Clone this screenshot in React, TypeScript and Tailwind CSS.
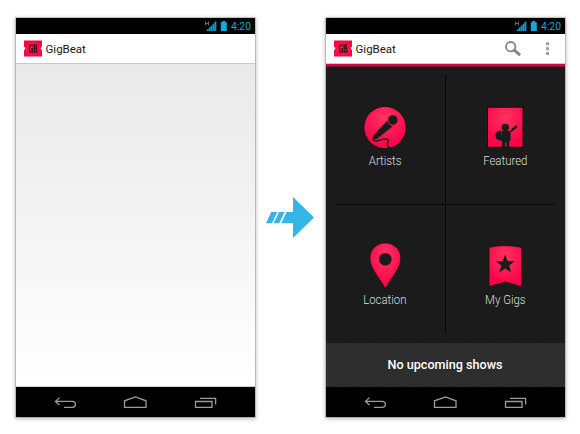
import type { ReactNode } from "react";

const BLACK = "#1b1b1b";

function StatusBar() {
  return (
    <div className="flex h-4 shrink-0 items-center justify-end bg-black pr-[2.500px]">
      <svg width="28" height="16" viewBox="0 0 28 16">
        <path d="M3.500 3.500v4M6.500 3.500v4M3.500 5.500h3" stroke="#777" strokeWidth="0.9" fill="none" />
        <path d="M4 13 14.300 3v10z" fill="#075f7e" />
        <path d="M5.500 13v-1.600M7.500 13V9.600M9.500 13V7.700M11.500 13V5.700M13.500 13V3.500" stroke="#0a9fd0" strokeWidth="1.300" />
        <path d="M18.800 4.300h1.600V3h2.800v1.300h1.600v8.800h-6z" fill="#14a9dc" />
      </svg>
      <span className="ml-[1px] w-[21px] whitespace-nowrap text-[11.500px] leading-4 text-[#1ba6d8]">
        <span className="inline-block origin-left scale-x-[0.9]">4:20</span>
      </span>
    </div>
  );
}

function Logo() {
  return (
    <svg width="18" height="17" viewBox="0 0 18 17">
      <defs>
        <radialGradient id="logo">
          <stop offset="0" stopColor="#ff2b58" />
          <stop offset="1" stopColor="#f90546" />
        </radialGradient>
      </defs>
      <path d="M0 .5h18v6.300q-1.300.3-1.300 1.600t1.300 1.600v6.500H0V10q1.300-.3 1.300-1.600T0 6.800z" fill="url(#logo)" />
      <g fill="none" stroke="#4a101c" strokeWidth="1.500">
        <path d="M8.200 6.400V5.200H5.600v6.700h2.700V8.700H7.200" />
        <path d="M10.200 4.900h2.100v3.300h-2.100h2.400v3.700h-2.400z" />
      </g>
    </svg>
  );
}

function ActionBar({ children }: { children?: ReactNode }) {
  return (
    <div className="flex h-[30px] shrink-0 items-center border-b border-[#c9c9c9] bg-white pl-2">
      <Logo />
      <span className="ml-1 text-[11.500px] leading-4 text-[#171717]">GigBeat</span>
      {children}
    </div>
  );
}

function NavBar() {
  return (
    <div className="h-[30px] shrink-0 bg-black">
      <svg width="239" height="30" viewBox="0 0 239 30" fill="none" stroke="#9d9d98" strokeWidth="1.300">
        <path d="M43.500 10.600 39.500 14.400l4 3.700M40 14.400h16.500a2.900 2.900 0 0 1 0 5.900H48" />
        <path d="M108.500 20.300v-6.500l11-3.800 10.500 3.800v6.500z" />
        <path d="M179.500 14.500h16.500v5.800h-16.500zM184 11.300h15.600v6.200" />
      </svg>
    </div>
  );
}

function Phone({ children }: { children: ReactNode }) {
  return (
    <div className="flex h-[399px] w-[239px] shrink-0 flex-col bg-white shadow-[0_0_0_1px_rgba(0,0,0,0.14),0_1px_4px_1px_rgba(0,0,0,0.26)]">
      <StatusBar />
      {children}
      <NavBar />
    </div>
  );
}

function Arrow() {
  return (
    <svg className="mt-[178px] shrink-0" width="71" height="43" viewBox="255 196 71 43" fill="#33b5e5">
      <path d="M293 197 314 217.400 293 238V223.200H281.200L286.600 212h6.400z" />
      <path d="M271.200 212h6.100L272 223.200h-6zM279 212h5.600l-5.400 11.200h-5.600z" />
    </svg>
  );
}

function Gradient({ id }: { id: string }) {
  return (
    <defs>
      <radialGradient id={id} cx="50%" cy="28%" r="65%">
        <stop offset="0" stopColor="#ff3460" />
        <stop offset="1" stopColor="#fb0448" />
      </radialGradient>
    </defs>
  );
}

function ArtistsIcon() {
  return (
    <svg width="50" height="50" viewBox="0 0 50 50">
      <Gradient id="artists" />
      <circle cx="25" cy="25.500" r="21.500" fill="#0f0f0f" />
      <circle cx="25" cy="25.500" r="20.700" fill="url(#artists)" />
      <circle cx="32.800" cy="18" r="4.800" fill={BLACK} />
      <path d="m27 18.800 5.200 6L17 36.800q-2.700.8-3.500-.2t.4-3.500z" fill={BLACK} />
      <path d="M27.800 17.300q.5 5.500 6.500 6.900" fill="none" stroke="#e51547" strokeWidth=".9" />
      <path d="M14 35c-2 2.500-.5 4.500 3.500 3.700 4-.8 8-3.200 10.500-.8 2 2-2.500 3.600-.3 5.600.7.7 1.600 1.200 1.300 2.800" fill="none" stroke={BLACK} strokeWidth="1.500" />
    </svg>
  );
}

function FeaturedIcon() {
  return (
    <svg width="50" height="50" viewBox="0 0 50 50">
      <Gradient id="featured" />
      <path d="M7 4.700h36.500v41H7z" fill="#0f0f0f" />
      <path d="M8 5.700h34.500v39H8z" fill="url(#featured)" />
      <circle cx="25.300" cy="25.500" r="3.800" fill={BLACK} />
      <path d="M21.700 29h7.500q1.300.8 1.300 3v6.700h-1.300v6.500h-2.800v-4.600h-1.300v4.600H22V39h-1.200z" fill={BLACK} />
      <path d="M21 28.500c-4 0-6 2.700-5.600 5.500.2 2.700 2 4.600 6.100 4.200z" fill={BLACK} />
      <path d="m30 30 6.500-5.200" stroke={BLACK} strokeWidth="1.700" />
      <path d="m32 27.800 5-4" stroke={BLACK} strokeWidth="2.200" />
    </svg>
  );
}

function LocationIcon() {
  return (
    <svg width="50" height="50" viewBox="0 0 50 50">
      <Gradient id="location" />
      <path
        d="M25.300 4C16.800 4 10 10.600 10 19c0 10 8.500 18.500 15.300 30.500C32 37.500 40.700 29 40.700 19 40.700 10.600 33.800 4 25.300 4z"
        fill="url(#location)" stroke="#101010" strokeWidth=".6"
      />
      <circle cx="25.300" cy="20.300" r="6.300" fill={BLACK} />
    </svg>
  );
}

function GigsIcon() {
  return (
    <svg width="50" height="50" viewBox="0 0 50 50">
      <Gradient id="gigs" />
      <path d="M9 8.200q16-3.200 32.500 0v39.300l-16.400-4.600L9 47.500z" fill="url(#gigs)" stroke="#101010" strokeWidth=".8" />
      <path
        d="m25.200 15.200 2.400 6.900 7.200.1-5.700 4.400 2.100 6.900-6-4-6 4 2.100-6.900-5.700-4.400 7.200-.1z"
        fill={BLACK}
      />
    </svg>
  );
}

function Tile({ label, icon, className }: { label: string; icon: ReactNode; className: string }) {
  return (
    <div className={`flex flex-col items-center ${className}`}>
      {icon}
      <span className="scale-x-[0.95] text-[12px] font-light leading-4 text-[#dedede]">{label}</span>
    </div>
  );
}

export default function App() {
  return (
    <div className="flex h-[434px] w-[580px] items-start overflow-hidden bg-white pl-[15.500px] pt-[18px] font-[Roboto,sans-serif]">
      <Phone>
        <ActionBar />
        <div className="flex-1 border-b border-[#cfcfcf] bg-linear-to-b from-[#e9e9e9] to-white" />
      </Phone>
      <Arrow />
      <Phone>
        <ActionBar>
          <svg className="ml-auto" width="61" height="29" viewBox="0 0 61 29">
            <circle cx="6.700" cy="12.700" r="4.700" fill="none" stroke="#858585" strokeWidth="1.800" />
            <path d="m10.200 16.200 5 4.200" stroke="#858585" strokeWidth="2.900" strokeLinecap="round" />
            <path d="M42 8.300h3v3h-3zM42 13.200h3v3h-3zM42 18.100h3v3h-3z" fill="#a0a0a0" />
          </svg>
        </ActionBar>
        <div className="h-[3px] shrink-0 border-b border-[#80112e] bg-[#d20940]" />
        <div className="flex flex-1 flex-col items-center bg-[#1b1b1b] pt-[8px]">
          <div className="grid h-[259px] w-[220px] grid-cols-2 grid-rows-[130px_129px] bg-[linear-gradient(#060606,#060606),linear-gradient(#060606,#060606)] bg-[length:1px_100%,100%_1px] bg-[position:109.500px_0,0_129px] bg-no-repeat">
            <Tile label="Artists" icon={<ArtistsIcon />} className="gap-[1px] pr-[9.500px] pt-[26.500px]" />
            <Tile label="Featured" icon={<FeaturedIcon />} className="gap-[1px] pl-[10px] pt-[26.500px]" />
            <Tile label="Location" icon={<LocationIcon />} className="gap-[3px] pr-[9.500px] pt-[34px]" />
            <Tile label="My Gigs" icon={<GigsIcon />} className="gap-[3px] pl-[10px] pt-[34px]" />
          </div>
        </div>
        <div className="flex h-[44px] shrink-0 items-center justify-center bg-[#2b2b2b] bg-[linear-gradient(45deg,#323232_0%,#323232_18%,#242424_34%,#242424_50%,#323232_50%,#323232_68%,#242424_84%,#242424_100%)] bg-[length:3px_3px]">
          <span className="text-[12.600px] font-medium leading-4 text-white">No upcoming shows</span>
        </div>
      </Phone>
    </div>
  );
}
